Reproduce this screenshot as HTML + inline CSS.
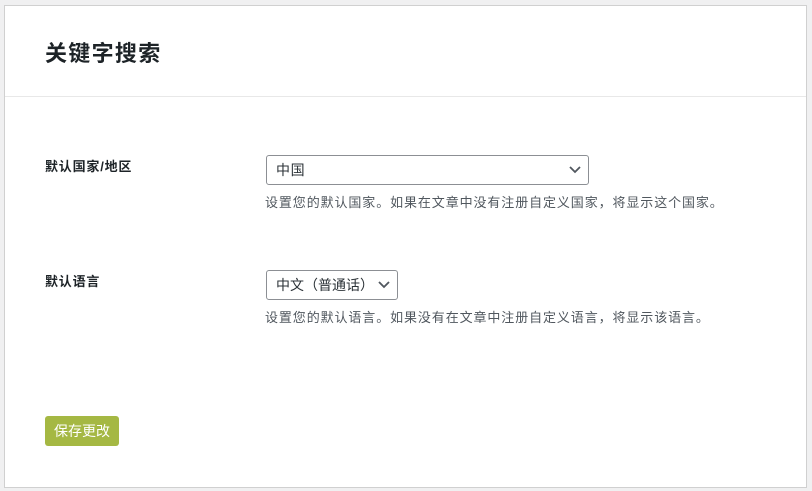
<!DOCTYPE html>
<html><head><meta charset="utf-8"><style>
body{margin:0;width:812px;height:491px;background:#f0f0f1;font-family:"Liberation Sans","Noto Sans CJK SC",sans-serif;position:relative;overflow:hidden}
.p{position:absolute;left:4px;top:5px;width:801px;height:481px;background:#fff;border:1px solid #d0d0d0}
.hr{position:absolute;left:0;right:0;top:90px;border-top:1px solid #e8e8e8}
.t{position:absolute;left:40px;top:30px;font-size:22px;font-weight:bold;color:#1d2327;letter-spacing:1.3px}
.l{position:absolute;left:40px;font-size:13px;font-weight:bold;color:#1d2327;letter-spacing:0.8px}
.s{position:absolute;left:261px;border:1px solid #8c8f94;border-radius:3px;font-size:14px;color:#2c3338;line-height:28px;padding-left:9px;box-sizing:border-box;height:30px;letter-spacing:0.6px;background:#fff}
.s svg{position:absolute;right:7px;top:9px}
.d{position:absolute;left:260px;font-size:13px;color:#50575e;letter-spacing:0.9px}
.b{position:absolute;left:40px;top:410px;width:74px;height:30px;background:#a5b843;border-radius:3px;color:#fff;font-size:14px;line-height:30px;text-align:center}
</style></head><body><div class="p">
<div class="t">关键字搜索</div><div class="hr"></div>
<div class="l" style="top:150px">默认国家/地区</div>
<div class="s" style="top:149px;width:323px">中国<svg width="12" height="10" viewBox="0 0 12 10"><path d="M1 2l5 5 5-5" fill="none" stroke="#50575e" stroke-width="1.8"/></svg></div>
<div class="d" style="top:186px">设置您的默认国家。如果在文章中没有注册自定义国家，将显示这个国家。</div>
<div class="l" style="top:265px">默认语言</div>
<div class="s" style="top:264px;width:132px;letter-spacing:0">中文（普通话）<svg width="12" height="10" viewBox="0 0 12 10"><path d="M1 2l5 5 5-5" fill="none" stroke="#50575e" stroke-width="1.8"/></svg></div>
<div class="d" style="top:301px">设置您的默认语言。如果没有在文章中注册自定义语言，将显示该语言。</div>
<div class="b">保存更改</div>
</div></body></html>
